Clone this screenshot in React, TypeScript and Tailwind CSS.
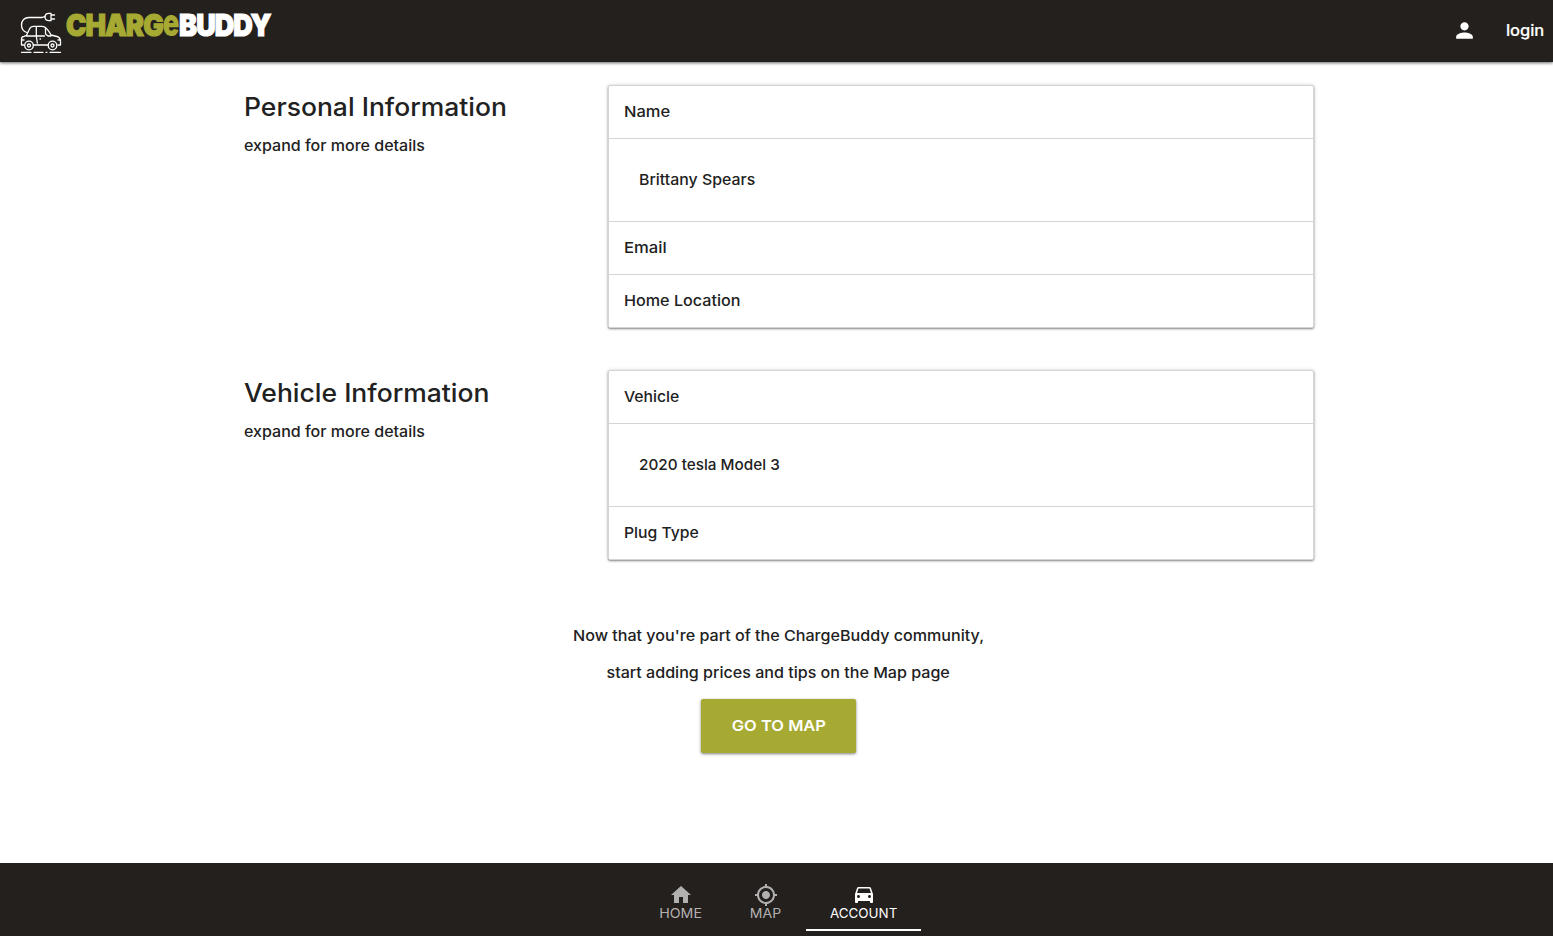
import type { ReactNode } from "react";

function CarLogo() {
  return (
    <svg width="42" height="42" viewBox="0 0 42 42" fill="none" stroke="#fff" strokeWidth="1.3" strokeLinecap="round" strokeLinejoin="round">
      <path d="M7 20.500C3.500 19.500 1.500 17 1.500 13C1.500 8.500 4.500 5.500 9 5.500H21.500C23.500 5.500 23.300 4.500 25 4.500" />
      <path d="M31 1.300H29C26.500 1.300 25 2.700 25 5C25 7.300 26.500 8.700 29 8.700H31ZM31 3H34.500M31 7H34.500" />
      <path d="M4 33H1.500V27C1.500 25.500 2.500 24.500 4 24.300L6.500 23.300L9.500 17C10.300 15.300 11.500 14.300 13.500 14.300H22C26 14.300 28.500 18 31 23L37 24.500C39.500 25.200 40.500 27 40.500 29.500V33H38M13.500 33H28M6.500 24H24.500M16.300 15V24L17.300 31M25.500 15.500V22L28 24H31M20 27H20.500M1.500 28H4M38 28H40.500" />
      <circle cx="9" cy="33.500" r="4.300" />
      <circle cx="9" cy="33.500" r="1.500" />
      <circle cx="32.500" cy="33.500" r="4.300" />
      <circle cx="32.500" cy="33.500" r="1.500" />
      <path d="M1.500 40.300H11M14 40.300H23M26 40.300H27M30 40.300H40.500" />
    </svg>
  );
}

function Icon({ d, size }: { d: string; size: number }) {
  return (
    <svg width={size} height={size} viewBox="0 0 24 24" fill="currentColor">
      <path d={d} />
    </svg>
  );
}

const paths = {
  person: "M12 12c2.210 0 4-1.790 4-4s-1.790-4-4-4-4 1.790-4 4 1.790 4 4 4zm0 2c-2.670 0-8 1.340-8 4v2h16v-2c0-2.660-5.330-4-8-4z",
  home: "M10 20v-6h4v6h5v-8h3L12 3 2 12h3v8z",
  location: "M12 8c-2.210 0-4 1.790-4 4s1.790 4 4 4 4-1.790 4-4-1.790-4-4-4zm8.940 3c-.46-4.170-3.770-7.480-7.940-7.940V1h-2v2.060C6.830 3.520 3.520 6.830 3.060 11H1v2h2.060c.46 4.170 3.770 7.480 7.940 7.940V23h2v-2.060c4.170-.46 7.480-3.770 7.940-7.940H23v-2h-2.060zM12 19c-3.870 0-7-3.130-7-7s3.130-7 7-7 7 3.130 7 7-3.130 7-7 7z",
  car: "M18.920 5.010C18.720 4.420 18.160 4 17.500 4h-11c-.66 0-1.210.42-1.420 1.010L3 11v8c0 .55.45 1 1 1h1c.55 0 1-.45 1-1v-1h12v1c0 .55.45 1 1 1h1c.55 0 1-.45 1-1v-8l-2.080-5.990zM6.500 15c-.83 0-1.500-.67-1.500-1.500S5.670 12 6.500 12s1.500.67 1.500 1.500S7.330 15 6.500 15zm11 0c-.83 0-1.500-.67-1.500-1.500s.67-1.500 1.500-1.500 1.500.67 1.500 1.500-.67 1.500-1.500 1.500zM5 10l1.500-4.500h11L19 10H5z",
};

function Row({ children, className }: { children: ReactNode; className: string }) {
  return (
    <div className="flex h-[53px] items-center border-b border-[#d4d4d5] px-[15px] last:h-[52px] last:border-b-0">
      <span className={`inline-block origin-left ${className}`}>{children}</span>
    </div>
  );
}

function Detail({ children, className }: { children: ReactNode; className: string }) {
  return (
    <div className="flex h-[83px] items-center border-b border-[#d4d4d5] px-[30px]">
      <span className={`inline-block origin-left ${className}`}>{children}</span>
    </div>
  );
}

const card = "w-[706px] rounded-[2px] border border-[#d4d4d5] bg-white shadow-[0_1px_2px_0_rgba(34,36,38,0.5),0_0_4px_0_rgba(34,36,38,0.15)]";

export default function App() {
  return (
    <div className="flex h-[936px] w-[1553px] flex-col bg-white font-['Inter',sans-serif] text-[15px] leading-[18px] font-medium whitespace-nowrap text-[#212121]">
      <header className="flex h-[62px] shrink-0 items-start justify-between bg-[#24201e] text-white shadow-[0_1px_3px_rgba(0,0,0,0.6)]">
        <div className="flex items-start pt-[12px] pl-[20px]">
          <CarLogo />
          <div className="ml-[4px] flex h-[26px] items-center text-[30px] leading-[26px] font-black tracking-[-1px] [-webkit-text-stroke:1.2px_currentColor]">
            <span className="flex w-[113px] origin-left scale-x-[0.91] text-[#a6aa33]">
              CHARG<span className="inline-block origin-[50%_88%] scale-y-[1.28] [-webkit-text-stroke:0px]">e</span>
            </span>
            <span className="inline-block origin-left scale-x-[0.9]">BUDDY</span>
          </div>
        </div>
        <div className="flex h-[60px] items-center gap-[30px] pr-[9px]">
          <Icon d={paths.person} size={25} />
          <span className="inline-block origin-right scale-x-[1.03] text-[16px] font-medium [-webkit-text-stroke:0.2px_currentColor]">login</span>
        </div>
      </header>

      <main className="flex grow flex-col">
        <section className="flex pt-[23px] pl-[244px]">
          <div className="w-[364px] pt-[6px]">
            <h1 className="w-fit origin-left scale-x-[1.06] text-[25px] leading-[33px]">Personal Information</h1>
            <p className="mt-[13px] w-fit origin-left scale-x-[1.068]">expand for more details</p>
          </div>
          <div className={card}>
            <Row className="scale-x-[1.1]">Name</Row>
            <Detail className="scale-x-[1.06]">Brittany Spears</Detail>
            <Row className="scale-x-[1.11]">Email</Row>
            <Row className="scale-x-[1.076]">Home Location</Row>
          </div>
        </section>
        <section className="flex pt-[42px] pl-[244px]">
          <div className="w-[364px] pt-[7px]">
            <h1 className="w-fit origin-left scale-x-[1.06] text-[25px] leading-[33px]">Vehicle Information</h1>
            <p className="mt-[13px] w-fit origin-left scale-x-[1.068]">expand for more details</p>
          </div>
          <div className={card}>
            <Row className="scale-x-[1.05]">Vehicle</Row>
            <Detail className="scale-x-[1.02]">2020 tesla Model 3</Detail>
            <Row className="scale-x-[1.05]">Plug Type</Row>
          </div>
        </section>
        <section className="flex flex-col items-center pt-[67px] pl-[4px]">
          <p className="scale-x-[1.073]">Now that you're part of the ChargeBuddy community,</p>
          <p className="mt-[19px] scale-x-[1.072]">start adding prices and tips on the Map page</p>
          <button className="mt-[17px] h-[54px] w-[155px] rounded-[2px] bg-[#a6aa33] font-semibold text-white shadow-[0_1px_3px_rgba(0,0,0,0.5)]">
            <span className="inline-block scale-x-[1.1]">GO TO MAP</span>
          </button>
        </section>
      </main>

      <nav className="flex h-[73px] shrink-0 justify-center bg-[#24201e] pl-[4px] text-[13px] leading-[12px] font-normal text-[#b3b1b0]">
        <a className="flex w-[91px] flex-col items-center pt-[20px] pr-px">
          <Icon d={paths.home} size={24} />
          <span className="scale-x-[1.09]">HOME</span>
        </a>
        <a className="flex w-[79px] flex-col items-center pt-[20px] pr-px">
          <Icon d={paths.location} size={24} />
          <span className="scale-x-[1.08]">MAP</span>
        </a>
        <a className="flex h-[68px] w-[115px] flex-col items-center border-b-2 border-white pt-[20px] text-white">
          <Icon d={paths.car} size={24} />
          <span className="scale-x-[1.03]">ACCOUNT</span>
        </a>
      </nav>
    </div>
  );
}
